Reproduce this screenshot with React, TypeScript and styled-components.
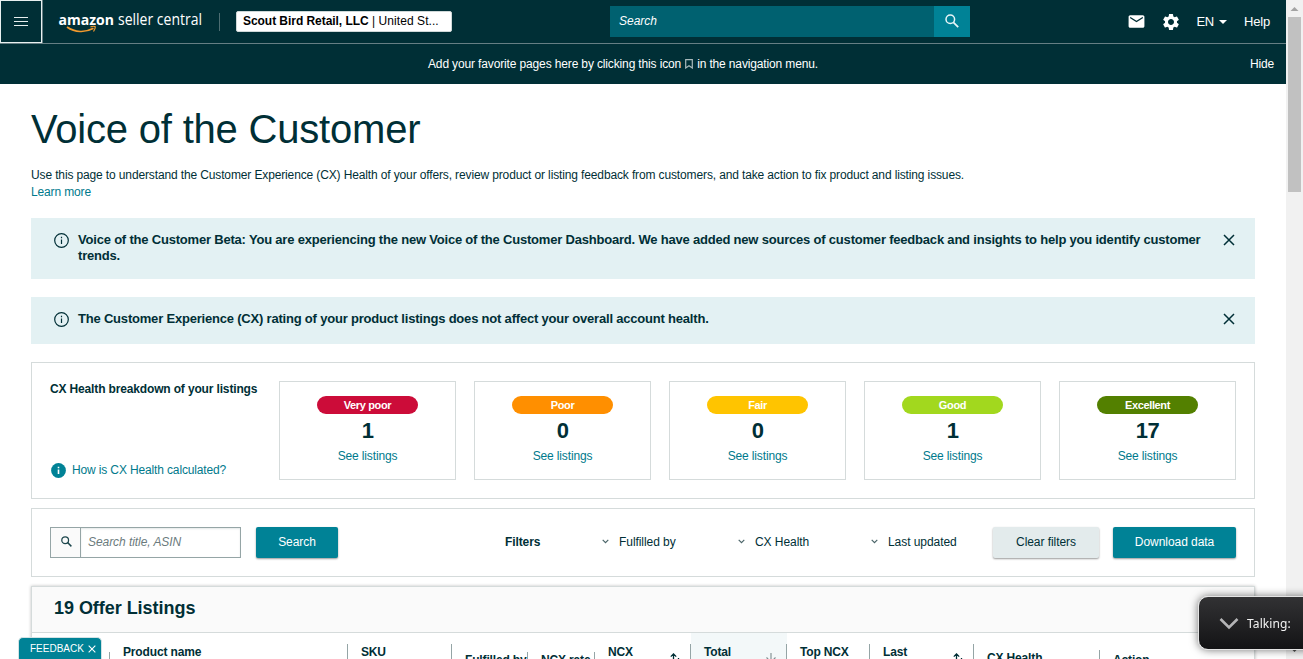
import React from "react";
import styled, { createGlobalStyle } from "styled-components";
import { MdMail, MdSettings } from "react-icons/md";

const Global = createGlobalStyle`
  * { box-sizing: border-box; }
  body { margin: 0; overflow: hidden; background: #fff; }
  body, button { font-family: "Liberation Sans", Arial, sans-serif; font-size: 12px; color: #002f36; }
  svg { display: block; flex: none; }
  h1, h2, p { margin: 0; }
`;

const Window = styled.div`
  display: flex;
  height: 659px;
  overflow: hidden;
`;
const Page = styled.div`
  width: 1286px;
  flex: none;
  height: 659px;
  overflow: hidden;
`;

const TopBar = styled.header`
  display: flex;
  align-items: center;
  height: 44px;
  background: #002f36;
  border-bottom: 1px solid #667f84;
  color: #fff;
`;
const MenuButton = styled.button`
  display: flex;
  align-items: center;
  justify-content: center;
  width: 42px;
  height: 43px;
  padding: 0;
  border: 1px solid #e8f0f0;
  background: transparent;
  box-shadow: 1px 0 0 #667f84;
`;
const Logo = styled.svg`
  margin-left: 16px;
`;
const Divider = styled.span`
  width: 1px;
  height: 18px;
  margin: 0 16px;
  background: #4d6d72;
`;
const StorePicker = styled.div`
  width: 216px;
  height: 21px;
  padding: 0 6px;
  border: 1px solid #cfd8d8;
  border-radius: 2px;
  background: #fff;
  color: #000;
  line-height: 19px;
  white-space: nowrap;
  letter-spacing: 0.07px;
  b { letter-spacing: -0.05px; }
`;
const GlobalSearch = styled.div`
  display: flex;
  width: 360px;
  height: 31px;
  margin: 0 0 1px 158px;
`;
const GlobalField = styled.div`
  flex: 1;
  padding-left: 9px;
  background: #006170;
  font-style: italic;
  line-height: 31px;
`;
const GlobalGo = styled.div`
  display: flex;
  align-items: center;
  justify-content: center;
  width: 36px;
  background: #008296;
`;
const Tools = styled.div`
  display: flex;
  align-items: center;
  flex: 1;
  justify-content: flex-end;
  gap: 15px;
  padding-right: 16px;
  font-size: 13px;
  letter-spacing: -0.2px;
`;
const Lang = styled.span`
  display: flex;
  align-items: center;
  gap: 5px;
  margin-right: 2px;
`;
const FavBar = styled.div`
  display: grid;
  grid-template-columns: 100px 1fr 100px;
  align-items: center;
  height: 40px;
  padding-right: 12px;
  background: #002f36;
  color: #fff;
  letter-spacing: -0.14px;
`;
const FavText = styled.span`
  display: flex;
  align-items: center;
  justify-content: center;
  gap: 4px;
  padding-right: 28px;
`;
const Hide = styled.span`
  text-align: right;
`;

const Main = styled.main`
  padding: 0 31px;
`;
const Title = styled.h1`
  padding-top: 22px;
  font-size: 40px;
  font-weight: 400;
  line-height: 46px;
  letter-spacing: -0.2px;
`;
const Intro = styled.p`
  margin: 15px 0 17px;
  line-height: 17px;
  letter-spacing: -0.132px;
  white-space: nowrap;
`;
const Link = styled.a`
  color: #007a8c;
  letter-spacing: -0.14px;
`;
const Alert = styled.div<{ $height: number }>`
  display: flex;
  align-items: flex-start;
  height: ${(p) => p.$height}px;
  margin-bottom: 18px;
  padding: 14px 20px 0 23px;
  background: #e3f1f3;
  > svg { margin-top: 1px; }
  > svg:last-child { margin-top: 2px; }
`;
const AlertText = styled.p`
  flex: 1;
  margin-left: 9px;
  font-size: 13px;
  font-weight: 700;
  line-height: 16px;
  letter-spacing: -0.2px;
  white-space: nowrap;
`;
const Panel = styled.section<{ $height: number; $gap: number }>`
  display: flex;
  height: ${(p) => p.$height}px;
  margin-bottom: ${(p) => p.$gap}px;
  padding: 18px;
  border: 1px solid #d5dbdb;
`;
const HealthIntro = styled.div`
  display: flex;
  flex-direction: column;
  justify-content: space-between;
  width: 229px;
  padding-bottom: 2px;
  line-height: 16px;
  b { letter-spacing: -0.15px; }
`;
const HowLink = styled(Link)`
  display: flex;
  align-items: center;
  gap: 6px;
  padding-left: 1px;
`;
const Cards = styled.div`
  display: flex;
  gap: 18px;
`;
const Card = styled.div`
  display: flex;
  flex-direction: column;
  align-items: center;
  width: 177px;
  height: 99px;
  padding-top: 14px;
  border: 1px solid #d5dbdb;
`;
const Pill = styled.span<{ $color: string }>`
  width: 101px;
  height: 18px;
  border-radius: 9px;
  background: ${(p) => p.$color};
  color: #fff;
  font-size: 11px;
  font-weight: 700;
  line-height: 18px;
  letter-spacing: -0.36px;
  text-align: center;
`;
const Count = styled.strong`
  margin: 4px 0 6px;
  font-size: 22px;
  line-height: 25px;
  letter-spacing: -0.6px;
`;

const SearchBox = styled.div`
  display: flex;
  width: 191px;
  height: 31px;
  border: 1px solid #95a5a6;
`;
const SearchIcon = styled.span`
  display: flex;
  align-items: center;
  justify-content: center;
  width: 30px;
  padding: 0 0 2px 1px;
  border-right: 1px solid #95a5a6;
  background: #fafafa;
`;
const SearchHint = styled.span`
  flex: 1;
  padding-left: 7px;
  box-shadow: inset 0 1px 2px #e4e8e8;
  color: #6b7b7d;
  font-style: italic;
  line-height: 29px;
  letter-spacing: -0.06px;
`;
const Button = styled.button<{ $width: number; $plain?: boolean; $left: number }>`
  width: ${(p) => p.$width}px;
  height: 31px;
  margin-left: ${(p) => p.$left}px;
  padding: 0 0 1px;
  border: 0;
  border-radius: 2px;
  background: ${(p) => (p.$plain ? "#e3ebec" : "#008296")};
  color: ${(p) => (p.$plain ? "#002f36" : "#fff")};
  box-shadow: 0 1px 2px rgba(0, 0, 0, 0.4);
  letter-spacing: -0.06px;
`;
const FiltersLabel = styled.b`
  width: 97px;
  margin-left: 167px;
  line-height: 31px;
  letter-spacing: -0.1px;
`;
const Filter = styled.span<{ $width: number }>`
  display: flex;
  align-items: center;
  gap: 10px;
  width: ${(p) => p.$width}px;
  height: 29px;
  letter-spacing: -0.06px;
  white-space: nowrap;
`;

const Listings = styled.section`
  height: 120px;
  border: 1px solid #d5dbdb;
  box-shadow: 0 0 3px rgba(0, 0, 0, 0.25);
`;
const ListingsTitle = styled.h2`
  height: 46px;
  padding-left: 22px;
  border-bottom: 1px solid #d5dbdb;
  background: #fafafa;
  font-size: 18px;
  line-height: 43px;
  letter-spacing: -0.04px;
`;
const HeadRow = styled.div`
  display: flex;
  height: 70px;
`;
const HeadCell = styled.div<{ $width: number; $top: number; $rule: number; $active?: boolean }>`
  display: flex;
  justify-content: space-between;
  width: ${(p) => p.$width}px;
  padding: ${(p) => p.$top}px 0 0 13px;
  background: linear-gradient(#95a5a6, #95a5a6) right 0 top ${(p) => p.$rule}px / 1px 60px no-repeat
    ${(p) => (p.$active ? "#f3f8f9" : "#fff")};
  font-weight: 700;
  line-height: 14px;
  letter-spacing: -0.15px;
  white-space: nowrap;
  svg { margin: 8px 10px 0 0; }
`;

const Scrollbar = styled.aside`
  display: flex;
  flex-direction: column;
  align-items: center;
  width: 17px;
  height: 659px;
  background: #f1f1f1;
`;
const Thumb = styled.div`
  width: 13px;
  height: 175px;
  margin-bottom: auto;
  background: #c1c1c1;
`;
const Feedback = styled.div`
  position: fixed;
  left: 18px;
  bottom: 0;
  display: flex;
  align-items: center;
  gap: 4px;
  width: 84px;
  height: 22px;
  padding-left: 11px;
  border: 1px solid #d3e3e5;
  border-bottom: 0;
  border-radius: 5px 5px 0 0;
  background: #008296;
  color: #fff;
  font-size: 10px;
`;
const Talking = styled.div`
  position: fixed;
  left: 1198px;
  top: 596px;
  display: flex;
  align-items: center;
  gap: 8px;
  width: 120px;
  height: 54px;
  padding-left: 20px;
  border: 1px solid #e4e4e4;
  border-radius: 10px;
  background: linear-gradient(#323234, #131315);
  box-shadow: 0 0 9px rgba(0, 0, 0, 0.55);
  color: #f2f2f2;
  font-family: "Noto Sans", sans-serif;
  font-size: 12px;
  letter-spacing: 0.1px;
`;

const InfoIcon = ({ filled }: { filled?: boolean }) => (
  <svg width="15" height="15" viewBox="0 0 15 15">
    <circle cx="7.5" cy="7.5" r={filled ? 7.4 : 6.8} fill={filled ? "#008296" : "none"} stroke={filled ? "none" : "#002f36"} strokeWidth="1.2" />
    <path d="M7.5 3.8v1.4M7.5 6.4v4.6" stroke={filled ? "#fff" : "#002f36"} strokeWidth={filled ? 1.6 : 1.2} />
  </svg>
);
const Magnifier = ({ size, color, stroke }: { size: number; color: string; stroke: number }) => (
  <svg width={size} height={size} viewBox="0 0 14 14">
    <circle cx="5.3" cy="5.3" r="4.3" fill="none" stroke={color} strokeWidth={stroke} />
    <path d="M8.4 8.4l4.8 4.8" stroke={color} strokeWidth={stroke * 1.15} />
  </svg>
);
const Cross = ({ size, color, width = 1.5 }: { size: number; color: string; width?: number }) => (
  <svg width={size} height={size} viewBox="0 0 12 12">
    <path d="M1 1l10 10M11 1L1 11" stroke={color} strokeWidth={width} />
  </svg>
);
const Chevron = () => (
  <svg width="7" height="5" viewBox="0 0 7 5">
    <path d="M.7.9l2.8 2.7L6.3.9" fill="none" stroke="#4a6468" strokeWidth="1.2" />
  </svg>
);
const SortIcon = ({ down }: { down?: boolean }) => (
  <svg width="12" height="14" viewBox="0 0 12 14">
    {down ? (
      <path d="M6 0v9M1.500 4.500L6 9l4.500-4.500" fill="none" stroke="#7c8c8f" strokeWidth="1.1" />
    ) : (
      <path d="M4.500 9V.9M1.800 3.600L4.500.9l2.700 2.700M9.500 5v8M7.500 11l2 2 2-2" fill="none" stroke="#002f36" strokeWidth="1.300" />
    )}
  </svg>
);

const ratings = [
  { name: "Very poor", color: "#cc0c39", count: 1 },
  { name: "Poor", color: "#ff8f00", count: 0 },
  { name: "Fair", color: "#ffc400", count: 0 },
  { name: "Good", color: "#a2d81e", count: 1 },
  { name: "Excellent", color: "#538000", count: 17 },
];

const columns: { label: string; width: number; top: number; rule: number; sort?: "both" | "down" }[] = [
  { label: "", width: 78, top: 12, rule: 19 },
  { label: "Product name", width: 238, top: 12, rule: 11 },
  { label: "SKU", width: 104, top: 12, rule: 11 },
  { label: "Fulfilled by", width: 76, top: 20, rule: 19 },
  { label: "NCX rate", width: 67, top: 20, rule: 19 },
  { label: "NCX", width: 96, top: 12, rule: 11, sort: "both" },
  { label: "Total", width: 96, top: 12, rule: 11, sort: "down" },
  { label: "Top NCX", width: 83, top: 12, rule: 11 },
  { label: "Last", width: 104, top: 12, rule: 11, sort: "both" },
  { label: "CX Health", width: 126, top: 18, rule: 17, sort: "both" },
  { label: "Action", width: 154, top: 20, rule: 80 },
];

export default function App() {
  return (
    <Window>
      <Global />
      <Page>
        <TopBar>
          <MenuButton aria-label="Menu">
            <svg width="14" height="9" viewBox="0 0 14 9">
              <path d="M0 .5h14M0 4.500h14M0 8.500h14" stroke="#e6eeee" strokeWidth="1" />
            </svg>
          </MenuButton>
          <Logo width="145" height="30" viewBox="0 0 145 30" fill="#fff" fontFamily='"Open Sans", sans-serif'>
            <text x="0.500" y="17.800" fontSize="15" fontWeight="700" textLength="55.500" lengthAdjust="spacingAndGlyphs">amazon</text>
            <text x="60" y="17.800" fontSize="15.500" fontWeight="400" textLength="84" lengthAdjust="spacingAndGlyphs">seller central</text>
            <path d="M9 20C17 25.500 27 26 35.500 21.300" fill="none" stroke="#f29a2e" strokeWidth="1.700" />
            <path d="M32.500 19.900Q36 18.700 37.300 19.700Q37.300 22 35.500 24.500" fill="none" stroke="#f29a2e" strokeWidth="1.200" />
          </Logo>
          <Divider />
          <StorePicker><b>Scout Bird Retail, LLC</b> | United St...</StorePicker>
          <GlobalSearch>
            <GlobalField>Search</GlobalField>
            <GlobalGo><Magnifier size={14} color="#e8f6f8" stroke={1.5} /></GlobalGo>
          </GlobalSearch>
          <Tools>
            <MdMail size={19} />
            <MdSettings size={20} />
            <Lang>
              EN
              <svg width="8" height="4" viewBox="0 0 8 4"><path d="M0 0h8L4 4z" fill="#fff" /></svg>
            </Lang>
            Help
          </Tools>
        </TopBar>
        <FavBar>
          <span />
          <FavText>
            Add your favorite pages here by clicking this icon
            <svg width="8" height="10" viewBox="0 0 8 10"><path d="M.7.700h6.600v8.300L4 6.800.7 9z" fill="none" stroke="#a9babc" strokeWidth="1.200" /></svg>
            in the navigation menu.
          </FavText>
          <Hide>Hide</Hide>
        </FavBar>
        <Main>
          <Title>Voice of the Customer</Title>
          <Intro>
            Use this page to understand the Customer Experience (CX) Health of your offers, review product or listing feedback from customers, and take action to fix product and listing issues.
            <br />
            <Link>Learn more</Link>
          </Intro>
          <Alert $height={61}>
            <InfoIcon />
            <AlertText>
              Voice of the Customer Beta: You are experiencing the new Voice of the Customer Dashboard. We have added new sources of customer feedback and insights to help you identify customer
              <br />
              trends.
            </AlertText>
            <Cross size={12} color="#002f36" />
          </Alert>
          <Alert $height={47}>
            <InfoIcon />
            <AlertText>The Customer Experience (CX) rating of your product listings does not affect your overall account health.</AlertText>
            <Cross size={12} color="#002f36" />
          </Alert>
          <Panel $height={137} $gap={9}>
            <HealthIntro>
              <b>CX Health breakdown of your listings</b>
              <HowLink><InfoIcon filled />How is CX Health calculated?</HowLink>
            </HealthIntro>
            <Cards>
              {ratings.map((r) => (
                <Card key={r.name}>
                  <Pill $color={r.color}>{r.name}</Pill>
                  <Count>{r.count}</Count>
                  <Link>See listings</Link>
                </Card>
              ))}
            </Cards>
          </Panel>
          <Panel $height={69} $gap={9}>
            <SearchBox>
              <SearchIcon><Magnifier size={11} color="#1c464c" stroke={1.6} /></SearchIcon>
              <SearchHint>Search title, ASIN</SearchHint>
            </SearchBox>
            <Button $width={82} $left={15}>Search</Button>
            <FiltersLabel>Filters</FiltersLabel>
            <Filter $width={136}><Chevron />Fulfilled by</Filter>
            <Filter $width={133}><Chevron />CX Health</Filter>
            <Filter $width={121}><Chevron />Last updated</Filter>
            <Button $width={106} $left={1} $plain>Clear filters</Button>
            <Button $width={123} $left={14}>Download data</Button>
          </Panel>
          <Listings>
            <ListingsTitle>19 Offer Listings</ListingsTitle>
            <HeadRow>
              {columns.map((c) => (
                <HeadCell key={c.label} $width={c.width} $top={c.top} $rule={c.rule} $active={c.sort === "down"}>
                  {c.label}
                  {c.sort && <SortIcon down={c.sort === "down"} />}
                </HeadCell>
              ))}
            </HeadRow>
          </Listings>
        </Main>
      </Page>
      <Scrollbar>
        <svg width="17" height="17" viewBox="0 0 17 17"><path d="M4.500 11h8l-4-4z" fill="#a3a3a3" /></svg>
        <Thumb />
        <svg width="17" height="17" viewBox="0 0 17 17"><path d="M4.500 6h8l-4 4z" fill="#505050" /></svg>
      </Scrollbar>
      <Feedback>FEEDBACK<Cross size={8} color="#fff" width={1.6} /></Feedback>
      <Talking>
        <svg width="20" height="13" viewBox="0 0 20 13"><path d="M1.500 2l8.500 8.500L18.500 2" fill="none" stroke="#b4b4b6" strokeWidth="2.600" /></svg>
        Talking:
      </Talking>
    </Window>
  );
}
